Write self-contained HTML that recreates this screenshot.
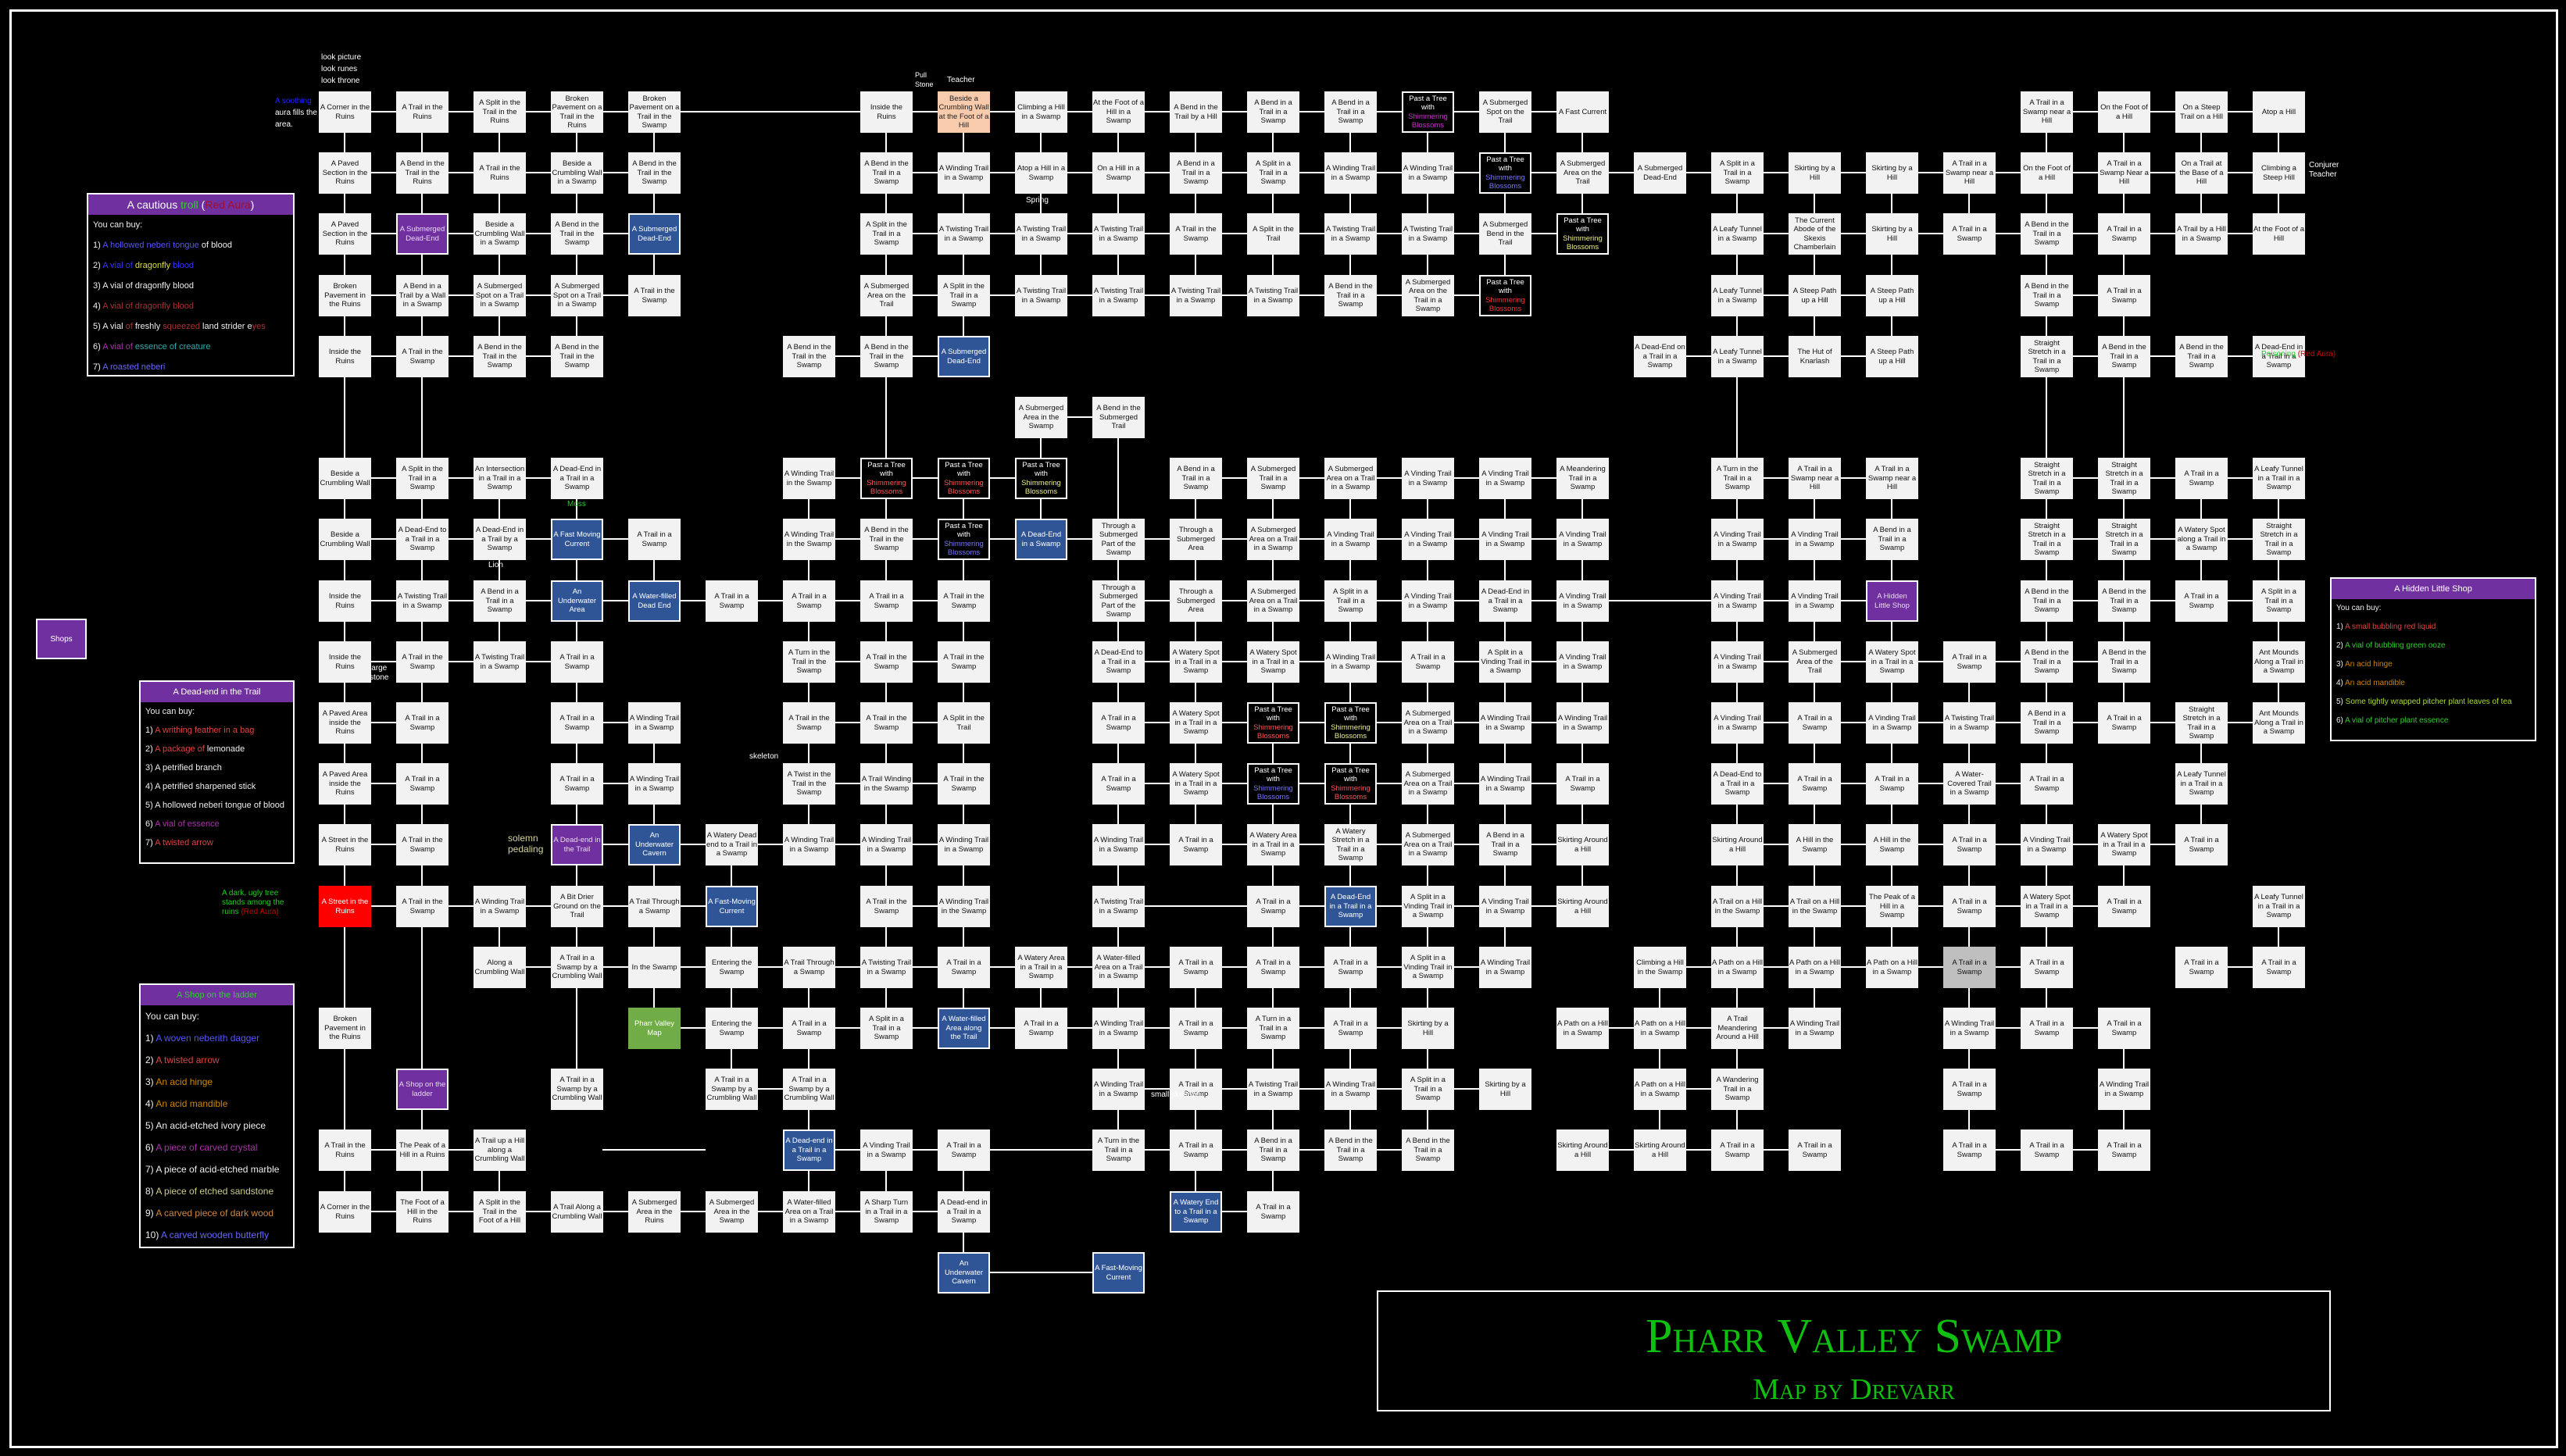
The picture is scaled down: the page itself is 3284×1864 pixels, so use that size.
<!DOCTYPE html>
<html><head><meta charset="utf-8"><style>
html,body{margin:0;padding:0;background:#000;}
body{width:3284px;height:1864px;position:relative;overflow:hidden;font-family:"Liberation Sans",sans-serif;}
.frame{position:absolute;left:12px;top:12px;width:3256px;height:1836px;border:3px solid #fff;}
.bx{position:absolute;width:67px;height:53px;background:#f2f2f2;color:#111;font-size:9.5px;line-height:11.5px;display:flex;align-items:center;justify-content:center;text-align:center;box-sizing:border-box;padding:0 1px;overflow:hidden;}
.k{background:#000;color:#fff;border:2px solid #fff;}
.b{background:#2f5597;color:#fff;border:2px solid #fff;}
.p{background:#7030a0;color:#e8d8f0;border:2px solid #fff;}
.r{background:#ff0000;color:#fff;}
.o{background:#f8cbad;color:#222;}
.g{background:#70ad47;color:#fff;}
.y{background:#bfbfbf;}
.h{position:absolute;height:2px;background:#fff;}
.v{position:absolute;width:2px;background:#fff;}
.panel{position:absolute;border:2px solid #fff;background:#000;color:#eee;font-size:11px;box-sizing:border-box;overflow:hidden;}
.panel .hd{background:#7030a0;color:#fff;text-align:center;font-size:14px;height:26px;line-height:26px;}
.panel div.it{padding-left:6px;height:26px;line-height:26px;white-space:nowrap;}
.note{position:absolute;color:#fff;font-size:10px;line-height:12px;}
.title{position:absolute;left:1762px;top:1652px;width:1221px;height:155px;border:2px solid #fff;box-sizing:border-box;text-align:center;color:#10c010;font-family:"Liberation Serif",serif;font-variant:small-caps;}
</style></head><body>
<div class="frame"></div>
<div id="map"></div>

<div class="note" style="left:411px;top:66px;line-height:15px">look picture<br>look runes<br>look throne</div>
<div class="note" style="left:352px;top:122px;line-height:15px"><span style="color:#22f">A soothing</span><br>aura fills the<br>area.</div>
<div class="note" style="left:1171px;top:90px;font-size:9px">Pull<br>Stone</div>
<div class="note" style="left:1212px;top:97px">Teacher</div>
<div class="note" style="left:2955px;top:206px">Conjurer<br>Teacher</div>
<div class="note" style="left:1313px;top:251px">Spring</div>
<div class="note" style="left:2894px;top:448px;color:#2c2">Poisoning <span style="color:#c00">(Red Aura)</span></div>
<div class="note" style="left:284px;top:1138px;color:#2c2">A dark, ugly tree<br>stands among the<br>ruins <span style="color:#c00">(Red Aura)</span></div>
<div class="note" style="left:650px;top:1066px;color:#d4d49a;font-size:12px;line-height:14px">solemn<br>pedaling</div>
<div class="note" style="left:959px;top:963px">skeleton</div>
<div class="note" style="left:1473px;top:1396px">small skeleton</div>
<div class="note" style="left:473px;top:850px">large<br>stone</div>
<div class="note" style="left:625px;top:718px">Lion</div>
<div class="note" style="left:726px;top:640px;color:#2c2">Moss</div>

<div style="position:absolute;left:46px;top:792px;width:65px;height:52px;background:#7030a0;border:2px solid #fff;box-sizing:border-box;color:#fff;font-size:10px;display:flex;align-items:center;justify-content:center">Shops</div>

<div class="panel" style="left:111px;top:247px;width:266px;height:235px">
<div class="hd">A cautious <span style="color:#3c3">troll</span> (<span style="color:#a01030">Red Aura</span>)</div>
<div class="it">You can buy:</div>
<div class="it">1) <span style="color:#55f">A hollowed neberi tongue</span> of blood</div>
<div class="it">2) <span style="color:#33f">A vial of </span><span style="color:#dd3">dragonfly</span><span style="color:#33f"> blood</span></div>
<div class="it">3) A vial of dragonfly blood</div>
<div class="it">4) <span style="color:#a33">A vial of dragonfly blood</span></div>
<div class="it">5) A vial <span style="color:#a33">of</span> freshly <span style="color:#a33">squeezed</span> land strider e<span style="color:#a33">yes</span></div>
<div class="it">6) <span style="color:#a3a">A vial of</span> <span style="color:#3aa">essence of creature</span></div>
<div class="it">7) <span style="color:#66f">A roasted neberi</span></div>
</div>

<div class="panel" style="left:178px;top:871px;width:199px;height:235px">
<div class="hd" style="font-size:11px">A Dead-end in the Trail</div>
<div class="it" style="height:24px;line-height:24px">You can buy:</div>
<div class="it" style="height:24px;line-height:24px">1) <span style="color:#d44">A writhing feather in a bag</span></div>
<div class="it" style="height:24px;line-height:24px">2) <span style="color:#d44">A package of</span> lemonade</div>
<div class="it" style="height:24px;line-height:24px">3) A petrified branch</div>
<div class="it" style="height:24px;line-height:24px">4) A petrified sharpened stick</div>
<div class="it" style="height:24px;line-height:24px">5) A hollowed neberi tongue of blood</div>
<div class="it" style="height:24px;line-height:24px">6) <span style="color:#a3a">A vial of essence</span></div>
<div class="it" style="height:24px;line-height:24px">7) <span style="color:#d44">A twisted arrow</span></div>
</div>

<div class="panel" style="left:178px;top:1259px;width:199px;height:339px;font-size:12px">
<div class="hd" style="font-size:11px;color:#3c3">A Shop on the ladder</div>
<div class="it" style="height:28px;line-height:28px">You can buy:</div>
<div class="it" style="height:28px;line-height:28px">1) <span style="color:#55f">A woven neberith dagger</span></div>
<div class="it" style="height:28px;line-height:28px">2) <span style="color:#d44">A twisted arrow</span></div>
<div class="it" style="height:28px;line-height:28px">3) <span style="color:#c80">An acid hinge</span></div>
<div class="it" style="height:28px;line-height:28px">4) <span style="color:#c80">An acid mandible</span></div>
<div class="it" style="height:28px;line-height:28px">5) An acid-etched ivory piece</div>
<div class="it" style="height:28px;line-height:28px">6) <span style="color:#a3a">A piece of carved crystal</span></div>
<div class="it" style="height:28px;line-height:28px">7) A piece of acid-etched marble</div>
<div class="it" style="height:28px;line-height:28px">8) <span style="color:#cc8">A piece of etched sandstone</span></div>
<div class="it" style="height:28px;line-height:28px">9) <span style="color:#c84">A carved piece of dark wood</span></div>
<div class="it" style="height:28px;line-height:28px">10) <span style="color:#66f">A carved wooden butterfly</span></div>
</div>

<div class="panel" style="left:2982px;top:739px;width:264px;height:210px;font-size:10px">
<div class="hd" style="font-size:11px">A Hidden Little Shop</div>
<div class="it" style="height:24px;line-height:24px">You can buy:</div>
<div class="it" style="height:24px;line-height:24px">1) <span style="color:#d44">A small bubbling red liquid</span></div>
<div class="it" style="height:24px;line-height:24px">2) <span style="color:#3c3">A vial of bubbling green ooze</span></div>
<div class="it" style="height:24px;line-height:24px">3) <span style="color:#c80">An acid hinge</span></div>
<div class="it" style="height:24px;line-height:24px">4) <span style="color:#c80">An acid mandible</span></div>
<div class="it" style="height:24px;line-height:24px">5) <span style="color:#ad3">Some tightly wrapped pitcher plant leaves of tea</span></div>
<div class="it" style="height:24px;line-height:24px">6) <span style="color:#3c3">A vial of pitcher plant essence</span></div>
</div>

<div class="title">
<div style="font-size:62px;margin-top:24px;line-height:66px">Pharr Valley Swamp</div>
<div style="font-size:38px;margin-top:14px;line-height:42px">Map by Drevarr</div>
</div>

<script>
var S='Shimmering Blossoms';
var D={
0:[[0,'A Corner in the Ruins'],[1,'A Trail in the Ruins'],[2,'A Split in the Trail in the Ruins'],[3,'Broken Pavement on a Trail in the Ruins'],[4,'Broken Pavement on a Trail in the Swamp'],[7,'Inside the Ruins'],[8,'Beside a Crumbling Wall at the Foot of a Hill','o'],[9,'Climbing a Hill in a Swamp'],[10,'At the Foot of a Hill in a Swamp'],[11,'A Bend in the Trail by a Hill'],[12,'A Bend in a Trail in a Swamp'],[13,'A Bend in a Trail in a Swamp'],[14,'Past a Tree with <span style="color:#c3c">'+S+'</span>','k'],[15,'A Submerged Spot on the Trail'],[16,'A Fast Current'],[22,'A Trail in a Swamp near a Hill'],[23,'On the Foot of a Hill'],[24,'On a Steep Trail on a Hill'],[25,'Atop a Hill']],
1:[[0,'A Paved Section in the Ruins'],[1,'A Bend in the Trail in the Ruins'],[2,'A Trail in the Ruins'],[3,'Beside a Crumbling Wall in a Swamp'],[4,'A Bend in the Trail in the Swamp'],[7,'A Bend in the Trail in a Swamp'],[8,'A Winding Trail in a Swamp'],[9,'Atop a Hill in a Swamp'],[10,'On a Hill in a Swamp'],[11,'A Bend in a Trail in a Swamp'],[12,'A Split in a Trail in a Swamp'],[13,'A Winding Trail in a Swamp'],[14,'A Winding Trail in a Swamp'],[15,'Past a Tree with <span style="color:#77f">'+S+'</span>','k'],[16,'A Submerged Area on the Trail'],[17,'A Submerged Dead-End'],[18,'A Split in a Trail in a Swamp'],[19,'Skirting by a Hill'],[20,'Skirting by a Hill'],[21,'A Trail in a Swamp near a Hill'],[22,'On the Foot of a Hill'],[23,'A Trail in a Swamp Near a Hill'],[24,'On a Trail at the Base of a Hill'],[25,'Climbing a Steep Hill']],
2:[[0,'A Paved Section in the Ruins'],[1,'A Submerged Dead-End','p'],[2,'Beside a Crumbling Wall in a Swamp'],[3,'A Bend in the Trail in the Swamp'],[4,'A Submerged Dead-End','b'],[7,'A Split in the Trail in a Swamp'],[8,'A Twisting Trail in a Swamp'],[9,'A Twisting Trail in a Swamp'],[10,'A Twisting Trail in a Swamp'],[11,'A Trail in the Swamp'],[12,'A Split in the Trail'],[13,'A Twisting Trail in a Swamp'],[14,'A Twisting Trail in a Swamp'],[15,'A Submerged Bend in the Trail'],[16,'Past a Tree with <span style="color:#ee8">'+S+'</span>','k'],[18,'A Leafy Tunnel in a Swamp'],[19,'The Current Abode of the Skexis Chamberlain'],[20,'Skirting by a Hill'],[21,'A Trail in a Swamp'],[22,'A Bend in the Trail in a Swamp'],[23,'A Trail in a Swamp'],[24,'A Trail by a Hill in a Swamp'],[25,'At the Foot of a Hill']],
3:[[0,'Broken Pavement in the Ruins'],[1,'A Bend in a Trail by a Wall in a Swamp'],[2,'A Submerged Spot on a Trail in a Swamp'],[3,'A Submerged Spot on a Trail in a Swamp'],[4,'A Trail in the Swamp'],[7,'A Submerged Area on the Trail'],[8,'A Split in the Trail in a Swamp'],[9,'A Twisting Trail in a Swamp'],[10,'A Twisting Trail in a Swamp'],[11,'A Twisting Trail in a Swamp'],[12,'A Twisting Trail in a Swamp'],[13,'A Bend in the Trail in a Swamp'],[14,'A Submerged Area on the Trail in a Swamp'],[15,'Past a Tree with <span style="color:#f33">'+S+'</span>','k'],[18,'A Leafy Tunnel in a Swamp'],[19,'A Steep Path up a Hill'],[20,'A Steep Path up a Hill'],[22,'A Bend in the Trail in a Swamp'],[23,'A Trail in a Swamp']],
4:[[0,'Inside the Ruins'],[1,'A Trail in the Swamp'],[2,'A Bend in the Trail in the Swamp'],[3,'A Bend in the Trail in the Swamp'],[6,'A Bend in the Trail in the Swamp'],[7,'A Bend in the Trail in the Swamp'],[8,'A Submerged Dead-End','b'],[17,'A Dead-End on a Trail in a Swamp'],[18,'A Leafy Tunnel in a Swamp'],[19,'The Hut of Knarlash'],[20,'A Steep Path up a Hill'],[22,'Straight Stretch in a Trail in a Swamp'],[23,'A Bend in the Trail in a Swamp'],[24,'A Bend in the Trail in a Swamp'],[25,'A Dead-End in a Trail in a Swamp']],
5:[[9,'A Submerged Area in the Swamp'],[10,'A Bend in the Submerged Trail']],
6:[[0,'Beside a Crumbling Wall'],[1,'A Split in the Trail in a Swamp'],[2,'An Intersection in a Trail in a Swamp'],[3,'A Dead-End in a Trail in a Swamp'],[6,'A Winding Trail in the Swamp'],[7,'Past a Tree with <span style="color:#f55">'+S+'</span>','k'],[8,'Past a Tree with <span style="color:#f55">'+S+'</span>','k'],[9,'Past a Tree with <span style="color:#ee8">'+S+'</span>','k'],[11,'A Bend in a Trail in a Swamp'],[12,'A Submerged Trail in a Swamp'],[13,'A Submerged Area on a Trail in a Swamp'],[14,'A Vinding Trail in a Swamp'],[15,'A Vinding Trail in a Swamp'],[16,'A Meandering Trail in a Swamp'],[18,'A Turn in the Trail in a Swamp'],[19,'A Trail in a Swamp near a Hill'],[20,'A Trail in a Swamp near a Hill'],[22,'Straight Stretch in a Trail in a Swamp'],[23,'Straight Stretch in a Trail in a Swamp'],[24,'A Trail in a Swamp'],[25,'A Leafy Tunnel in a Trail in a Swamp']],
7:[[0,'Beside a Crumbling Wall'],[1,'A Dead-End to a Trail in a Swamp'],[2,'A Dead-End in a Trail by a Swamp'],[3,'A Fast Moving Current','b'],[4,'A Trail in a Swamp'],[6,'A Winding Trail in the Swamp'],[7,'A Bend in the Trail in the Swamp'],[8,'Past a Tree with <span style="color:#77f">'+S+'</span>','k'],[9,'A Dead-End in a Swamp','b'],[10,'Through a Submerged Part of the Swamp'],[11,'Through a Submerged Area'],[12,'A Submerged Area on a Trail in a Swamp'],[13,'A Vinding Trail in a Swamp'],[14,'A Vinding Trail in a Swamp'],[15,'A Vinding Trail in a Swamp'],[16,'A Vinding Trail in a Swamp'],[18,'A Vinding Trail in a Swamp'],[19,'A Vinding Trail in a Swamp'],[20,'A Bend in a Trail in a Swamp'],[22,'Straight Stretch in a Trail in a Swamp'],[23,'Straight Stretch in a Trail in a Swamp'],[24,'A Watery Spot along a Trail in a Swamp'],[25,'Straight Stretch in a Trail in a Swamp']],
8:[[0,'Inside the Ruins'],[1,'A Twisting Trail in a Swamp'],[2,'A Bend in a Trail in a Swamp'],[3,'An Underwater Area','b'],[4,'A Water-filled Dead End','b'],[5,'A Trail in a Swamp'],[6,'A Trail in a Swamp'],[7,'A Trail in a Swamp'],[8,'A Trail in the Swamp'],[10,'Through a Submerged Part of the Swamp'],[11,'Through a Submerged Area'],[12,'A Submerged Area on a Trail in a Swamp'],[13,'A Split in a Trail in a Swamp'],[14,'A Vinding Trail in a Swamp'],[15,'A Dead-End in a Trail in a Swamp'],[16,'A Vinding Trail in a Swamp'],[18,'A Vinding Trail in a Swamp'],[19,'A Vinding Trail in a Swamp'],[20,'A Hidden Little Shop','p'],[22,'A Bend in the Trail in a Swamp'],[23,'A Bend in the Trail in a Swamp'],[24,'A Trail in a Swamp'],[25,'A Split in a Trail in a Swamp']],
9:[[0,'Inside the Ruins'],[1,'A Trail in the Swamp'],[2,'A Twisting Trail in a Swamp'],[3,'A Trail in a Swamp'],[6,'A Turn in the Trail in the Swamp'],[7,'A Trail in the Swamp'],[8,'A Trail in the Swamp'],[10,'A Dead-End to a Trail in a Swamp'],[11,'A Watery Spot in a Trail in a Swamp'],[12,'A Watery Spot in a Trail in a Swamp'],[13,'A Winding Trail in a Swamp'],[14,'A Trail in a Swamp'],[15,'A Split in a Vinding Trail in a Swamp'],[16,'A Vinding Trail in a Swamp'],[18,'A Vinding Trail in a Swamp'],[19,'A Submerged Area of the Trail'],[20,'A Watery Spot in a Trail in a Swamp'],[21,'A Trail in a Swamp'],[22,'A Bend in the Trail in a Swamp'],[23,'A Bend in the Trail in a Swamp'],[25,'Ant Mounds Along a Trail in a Swamp']],
10:[[0,'A Paved Area inside the Ruins'],[1,'A Trail in a Swamp'],[3,'A Trail in a Swamp'],[4,'A Winding Trail in a Swamp'],[6,'A Trail in the Swamp'],[7,'A Trail in the Swamp'],[8,'A Split in the Trail'],[10,'A Trail in a Swamp'],[11,'A Watery Spot in a Trail in a Swamp'],[12,'Past a Tree with <span style="color:#f55">'+S+'</span>','k'],[13,'Past a Tree with <span style="color:#ee8">'+S+'</span>','k'],[14,'A Submerged Area on a Trail in a Swamp'],[15,'A Winding Trail in a Swamp'],[16,'A Winding Trail in a Swamp'],[18,'A Vinding Trail in a Swamp'],[19,'A Trail in a Swamp'],[20,'A Vinding Trail in a Swamp'],[21,'A Twisting Trail in a Swamp'],[22,'A Bend in a Trail in a Swamp'],[23,'A Trail in a Swamp'],[24,'Straight Stretch in a Trail in a Swamp'],[25,'Ant Mounds Along a Trail in a Swamp']],
11:[[0,'A Paved Area inside the Ruins'],[1,'A Trail in a Swamp'],[3,'A Trail in a Swamp'],[4,'A Winding Trail in a Swamp'],[6,'A Twist in the Trail in the Swamp'],[7,'A Trail Winding in the Swamp'],[8,'A Trail in the Swamp'],[10,'A Trail in a Swamp'],[11,'A Watery Spot in a Trail in a Swamp'],[12,'Past a Tree with <span style="color:#77f">'+S+'</span>','k'],[13,'Past a Tree with <span style="color:#f55">'+S+'</span>','k'],[14,'A Submerged Area on a Trail in a Swamp'],[15,'A Winding Trail in a Swamp'],[16,'A Trail in a Swamp'],[18,'A Dead-End to a Trail in a Swamp'],[19,'A Trail in a Swamp'],[20,'A Trail in a Swamp'],[21,'A Water-Covered Trail in a Swamp'],[22,'A Trail in a Swamp'],[24,'A Leafy Tunnel in a Trail in a Swamp']],
12:[[0,'A Street in the Ruins'],[1,'A Trail in the Swamp'],[3,'A Dead-end in the Trail','p'],[4,'An Underwater Cavern','b'],[5,'A Watery Dead end to a Trail in a Swamp'],[6,'A Winding Trail in a Swamp'],[7,'A Winding Trail in a Swamp'],[8,'A Winding Trail in a Swamp'],[10,'A Winding Trail in a Swamp'],[11,'A Trail in a Swamp'],[12,'A Watery Area in a Trail in a Swamp'],[13,'A Watery Stretch in a Trail in a Swamp'],[14,'A Submerged Area on a Trail in a Swamp'],[15,'A Bend in a Trail in a Swamp'],[16,'Skirting Around a Hill'],[18,'Skirting Around a Hill'],[19,'A Hill in the Swamp'],[20,'A Hill in the Swamp'],[21,'A Trail in a Swamp'],[22,'A Vinding Trail in a Swamp'],[23,'A Watery Spot in a Trail in a Swamp'],[24,'A Trail in a Swamp']],
13:[[0,'A Street in the Ruins','r'],[1,'A Trail in the Swamp'],[2,'A Winding Trail in a Swamp'],[3,'A Bit Drier Ground on the Trail'],[4,'A Trail Through a Swamp'],[5,'A Fast-Moving Current','b'],[7,'A Trail in the Swamp'],[8,'A Winding Trail in the Swamp'],[10,'A Twisting Trail in a Swamp'],[12,'A Trail in a Swamp'],[13,'A Dead-End in a Trail in a Swamp','b'],[14,'A Split in a Vinding Trail in a Swamp'],[15,'A Vinding Trail in a Swamp'],[16,'Skirting Around a Hill'],[18,'A Trail on a Hill in the Swamp'],[19,'A Trail on a Hill in the Swamp'],[20,'The Peak of a Hill in a Swamp'],[21,'A Trail in a Swamp'],[22,'A Watery Spot in a Trail in a Swamp'],[23,'A Trail in a Swamp'],[25,'A Leafy Tunnel in a Trail in a Swamp']],
14:[[2,'Along a Crumbling Wall'],[3,'A Trail in a Swamp by a Crumbling Wall'],[4,'In the Swamp'],[5,'Entering the Swamp'],[6,'A Trail Through a Swamp'],[7,'A Twisting Trail in a Swamp'],[8,'A Trail in a Swamp'],[9,'A Watery Area in a Trail in a Swamp'],[10,'A Water-filled Area on a Trail in a Swamp'],[11,'A Trail in a Swamp'],[12,'A Trail in a Swamp'],[13,'A Trail in a Swamp'],[14,'A Split in a Vinding Trail in a Swamp'],[15,'A Winding Trail in a Swamp'],[17,'Climbing a Hill in the Swamp'],[18,'A Path on a Hill in a Swamp'],[19,'A Path on a Hill in a Swamp'],[20,'A Path on a Hill in a Swamp'],[21,'A Trail in a Swamp','y'],[22,'A Trail in a Swamp'],[24,'A Trail in a Swamp'],[25,'A Trail in a Swamp']],
15:[[0,'Broken Pavement in the Ruins'],[4,'Pharr Valley Map','g'],[5,'Entering the Swamp'],[6,'A Trail in a Swamp'],[7,'A Split in a Trail in a Swamp'],[8,'A Water-filled Area along the Trail','b'],[9,'A Trail in a Swamp'],[10,'A Winding Trail in a Swamp'],[11,'A Trail in a Swamp'],[12,'A Turn in a Trail in a Swamp'],[13,'A Trail in a Swamp'],[14,'Skirting by a Hill'],[16,'A Path on a Hill in a Swamp'],[17,'A Path on a Hill in a Swamp'],[18,'A Trail Meandering Around a Hill'],[19,'A Winding Trail in a Swamp'],[21,'A Winding Trail in a Swamp'],[22,'A Trail in a Swamp'],[23,'A Trail in a Swamp']],
16:[[1,'A Shop on the ladder','p'],[3,'A Trail in a Swamp by a Crumbling Wall'],[5,'A Trail in a Swamp by a Crumbling Wall'],[6,'A Trail in a Swamp by a Crumbling Wall'],[10,'A Winding Trail in a Swamp'],[11,'A Trail in a Swamp'],[12,'A Twisting Trail in a Swamp'],[13,'A Winding Trail in a Swamp'],[14,'A Split in a Trail in a Swamp'],[15,'Skirting by a Hill'],[17,'A Path on a Hill in a Swamp'],[18,'A Wandering Trail in a Swamp'],[21,'A Trail in a Swamp'],[23,'A Winding Trail in a Swamp']],
17:[[0,'A Trail in the Ruins'],[1,'The Peak of a Hill in a Ruins'],[2,'A Trail up a Hill along a Crumbling Wall'],[6,'A Dead-end in a Trail in a Swamp','b'],[7,'A Vinding Trail in a Swamp'],[8,'A Trail in a Swamp'],[10,'A Turn in the Trail in a Swamp'],[11,'A Trail in a Swamp'],[12,'A Bend in a Trail in a Swamp'],[13,'A Bend in the Trail in a Swamp'],[14,'A Bend in the Trail in a Swamp'],[16,'Skirting Around a Hill'],[17,'Skirting Around a Hill'],[18,'A Trail in a Swamp'],[19,'A Trail in a Swamp'],[21,'A Trail in a Swamp'],[22,'A Trail in a Swamp'],[23,'A Trail in a Swamp']],
18:[[0,'A Corner in the Ruins'],[1,'The Foot of a Hill in the Ruins'],[2,'A Split in the Trail in the Foot of a Hill'],[3,'A Trail Along a Crumbling Wall'],[4,'A Submerged Area in the Ruins'],[5,'A Submerged Area in the Swamp'],[6,'A Water-filled Area on a Trail in a Swamp'],[7,'A Sharp Turn in a Trail in a Swamp'],[8,'A Dead-end in a Trail in a Swamp'],[11,'A Watery End to a Trail in a Swamp','b'],[12,'A Trail in a Swamp']],
19:[[8,'An Underwater Cavern','b'],[10,'A Fast-Moving Current','b']]
};
function cx(c){return 441+99*c;}
function cy(r){return Math.round(143+78.2*r);}
var h='',has={};
for(var r in D){D[r].forEach(function(e){has[r+'_'+e[0]]=1;});}
function hl(x1,x2,y){h+='<div class="h" style="left:'+x1+'px;top:'+(y-1)+'px;width:'+(x2-x1)+'px"></div>';}
function vl(x,y1,y2){h+='<div class="v" style="left:'+(x-1)+'px;top:'+y1+'px;height:'+(y2-y1)+'px"></div>';}
for(var r in D){r=+r;D[r].forEach(function(e){var c=e[0];
 if(has[r+'_'+(c+1)])hl(cx(c)+33,cx(c+1)-33,cy(r));
 if(has[(r+1)+'_'+c])vl(cx(c),cy(r)+26,cy(r+1)-26);
});}
vl(cx(0),cy(4)+26,cy(6)-26);vl(cx(1),cy(4)+26,cy(6)-26);vl(cx(0),cy(13)+26,cy(15)-26);vl(cx(0),cy(15)+26,cy(17)-26);
vl(cx(1),cy(13)+26,cy(16)-26);vl(cx(3),cy(14)+26,cy(16)-26);vl(cx(7),cy(4)+26,cy(6)-26);vl(cx(10),cy(5)+26,cy(7)-26);
vl(cx(13),cy(8)+26,cy(9)-26);vl(cx(22),cy(4)+26,cy(6)-26);vl(cx(23),cy(4)+26,cy(6)-26);vl(cx(18),cy(4)+26,cy(6)-26);
hl(cx(4)+33,cx(7)-33,cy(0));hl(cx(16)+33,cx(18)-33,cy(1));hl(cx(10)+33,cx(14)-33,cy(13));hl(cx(8)+33,cx(10)-33,cy(17));
hl(cx(15)+33,cx(18)-33,cy(8));hl(cx(8)+33,cx(10)-33,cy(19));hl(cx(3)+33,cx(5)-33,cy(17));
for(var r in D){r=+r;D[r].forEach(function(e){
 var t=e[2]||'';
 h+='<div class="bx '+t+'" style="left:'+(cx(e[0])-33)+'px;top:'+(cy(r)-26)+'px"><span>'+e[1]+'</span></div>';
});}
document.getElementById('map').innerHTML=h;
</script>
</body></html>
